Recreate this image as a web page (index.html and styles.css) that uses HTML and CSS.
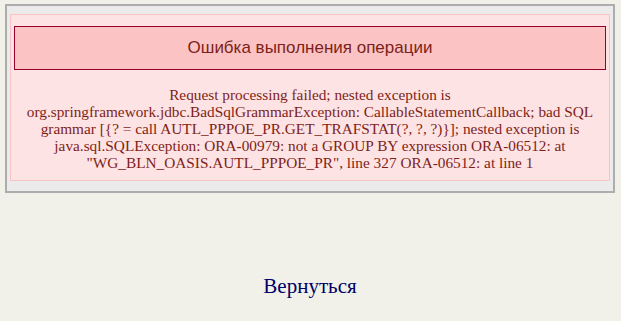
FILE: index.html
```html
<!DOCTYPE html>
<html lang="ru">
  <head>
    <meta charset="UTF-8" />
    <title>Ошибка</title>
    <link rel="stylesheet" href="styles.css">
  </head>
  <body>
    <div class="frame">
      <div class="error-box">
        <div class="error-title">Ошибка выполнения операции</div>
        <div class="error-text">
          Request processing failed; nested exception is
          org.springframework.jdbc.BadSqlGrammarException: CallableStatementCallback; bad SQL
          grammar [{? = call AUTL_PPPOE_PR.GET_TRAFSTAT(?, ?, ?)}]; nested exception is
          java.sql.SQLException: ORA-00979: not a GROUP BY expression ORA-06512: at
          "WG_BLN_OASIS.AUTL_PPPOE_PR", line 327 ORA-06512: at line 1
        </div>
      </div>
    </div>
    <div class="back">
      <a href="#">Вернуться</a>
    </div>
  </body>
</html>
```
FILE: styles.css
```css
body {
  margin: 0;
  padding: 4px 6px 0 5px;
  background-color: #f2f1e9;
  font-family: "Liberation Serif", Georgia, serif;
}
.frame {
  border: 2px solid #adadad;
  background-color: #ebebeb;
  padding: 8px 3px 10px 3px;
}
.error-box {
  border: 1px solid #f8c3c3;
  background-color: #fde3e3;
  padding: 11px 3px 9px 3px;
}
.error-title {
  border: 1px solid #99002e;
  background-color: #fbc3c3;
  color: #7d1f1a;
  font-family: "Liberation Sans", Arial, sans-serif;
  font-size: 17px;
  text-align: center;
  padding: 11px 0 11px 0;
}
.error-text {
  margin-top: 16px;
  color: #7d1f1a;
  font-size: 15.3px;
  line-height: 17px;
  text-align: center;
  padding: 0 4px;
}
.back {
  text-align: center;
  margin-top: 81px;
}
.back a {
  color: #000066;
  text-decoration: none;
  font-family: "Liberation Serif", "Times New Roman", serif;
  font-size: 21px;
}
```
